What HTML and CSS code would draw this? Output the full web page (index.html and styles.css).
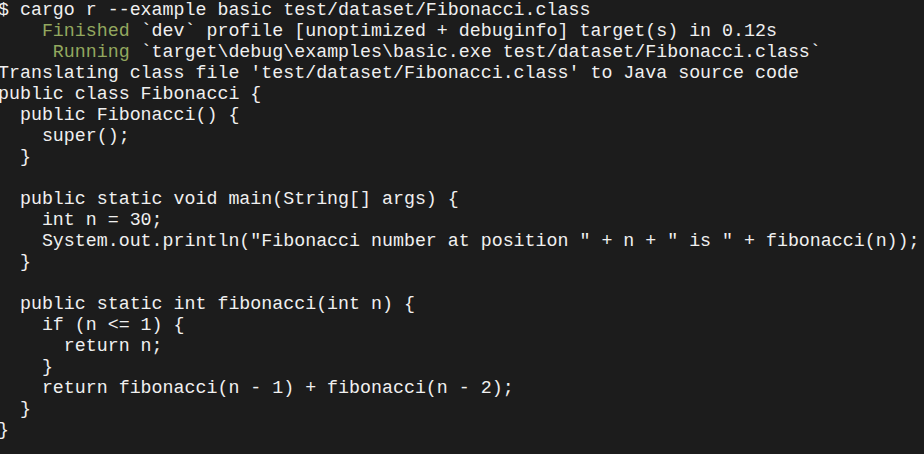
FILE: index.html
```html
<!DOCTYPE html>
<html>
<head>
<meta charset="utf-8">
<link rel="stylesheet" href="styles.css">
</head>
<body>
<pre class="term">$ cargo r --example basic test/dataset/Fibonacci.class
    <span class="ok">Finished</span> `dev` profile [unoptimized + debuginfo] target(s) in 0.12s
     <span class="ok">Running</span> `target\debug\examples\basic.exe test/dataset/Fibonacci.class`
Translating class file 'test/dataset/Fibonacci.class' to Java source code
public class Fibonacci {
  public Fibonacci() {
    super();
  }

  public static void main(String[] args) {
    int n = 30;
    System.out.println("Fibonacci number at position " + n + " is " + fibonacci(n));
  }

  public static int fibonacci(int n) {
    if (n &lt;= 1) {
      return n;
    }
    return fibonacci(n - 1) + fibonacci(n - 2);
  }
}</pre>
</body>
</html>
```

FILE: styles.css
```css
html, body {
  margin: 0;
  padding: 0;
  background: #1c1c1c;
  overflow: hidden;
  height: 100%;
}
.term {
  margin: 0 0 0 -2px;
  padding: 0;
  font-family: "Liberation Mono", monospace;
  font-size: 18.3px;
  line-height: 21px;
  color: #f0f0f0;
  white-space: pre;
}
.ok {
  color: #93a85f;
}
```
